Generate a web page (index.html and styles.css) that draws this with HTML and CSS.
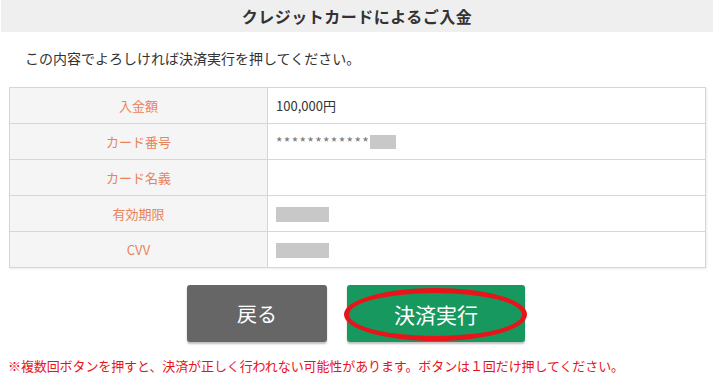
FILE: index.html
```html
<!DOCTYPE html>
<html lang="ja">
<head>
    <meta charset="UTF-8">
    <meta name="viewport" content="width=device-width, initial-scale=1.0">
    <title>クレジットカードによるご入金</title>
    <link rel="stylesheet" href="styles.css">
</head>
<body>
    <div class="head">
        <h2>クレジットカードによるご入金</h2>
    </div>
    <p class="msg">この内容でよろしければ決済実行を押してください。</p>
    <table class="confirm">
        <tr>
            <th>入金額</th>
            <td>100,000円</td>
        </tr>
        <tr>
            <th>カード番号</th>
            <td><span class="stars">************</span><span class="mask mask-s"></span></td>
        </tr>
        <tr>
            <th>カード名義</th>
            <td></td>
        </tr>
        <tr>
            <th>有効期限</th>
            <td><span class="mask"></span></td>
        </tr>
        <tr>
            <th>CVV</th>
            <td><span class="mask"></span></td>
        </tr>
    </table>
    <div class="btns">
        <button class="btn back">戻る</button>
        <button class="btn exec">決済実行<span class="ring"></span></button>
    </div>
    <p class="warn">※複数回ボタンを押すと、決済が正しく行われない可能性があります。ボタンは１回だけ押してください。</p>
</body>
</html>
```

FILE: styles.css
```css
*{padding: 0; margin: 0; box-sizing: border-box;}
body{font-family: "Noto Sans CJK JP", "Noto Sans", sans-serif; color: #333; background: #fff; width: 715px;}

.head{background: #efefef; height: 32px; margin: 0 2px 0 1px; display: flex; align-items: center; justify-content: center;}
.head h2{font-size: 16px; font-weight: bold; color: #333; line-height: 1; letter-spacing: 0.5px;}

.msg{font-size: 14px; line-height: 20px; padding: 16px 0 0 25px; height: 55px; color: #333;}

.confirm{border-collapse: collapse; width: 697px; margin-left: 9px; font-size: 13px; box-shadow: 1px 1px 2px rgba(0,0,0,0.08);}
.confirm th, .confirm td{border: 1px solid #d6d6d6; height: 36px; line-height: 20px;}
.confirm th{width: 258px; background: #f5f5f5; color: #e8845a; font-weight: normal; text-align: center;}
.confirm td{padding-left: 8px; color: #333; background: #fff;}
.confirm .stars{color: #777; font-size: 14px; letter-spacing: 1.3px; vertical-align: middle;}
.mask{display: inline-block; width: 53px; height: 15px; background: #c8c8c8; vertical-align: middle;}
.mask-s{width: 26px; height: 14px;}

.btns{display: flex; justify-content: center; gap: 20px; padding: 17px 3px 0 0;}
.btn{position: relative; height: 57px; border: none; border-radius: 3px; color: #fff; font-family: inherit; box-shadow: 0 2px 2px rgba(0,0,0,0.25);}
.back{width: 140px; background: #666; font-size: 20px;}
.exec{width: 178px; background: #16985f; font-size: 21px;}
.ring{position: absolute; left: -3px; top: 3px; width: 183px; height: 53px; border: 5px solid #e8141a; border-radius: 50%;}

.warn{font-size: 13px; color: #e8141a; padding: 15px 0 0 8px; line-height: 18px; letter-spacing: -0.1px;}
```
